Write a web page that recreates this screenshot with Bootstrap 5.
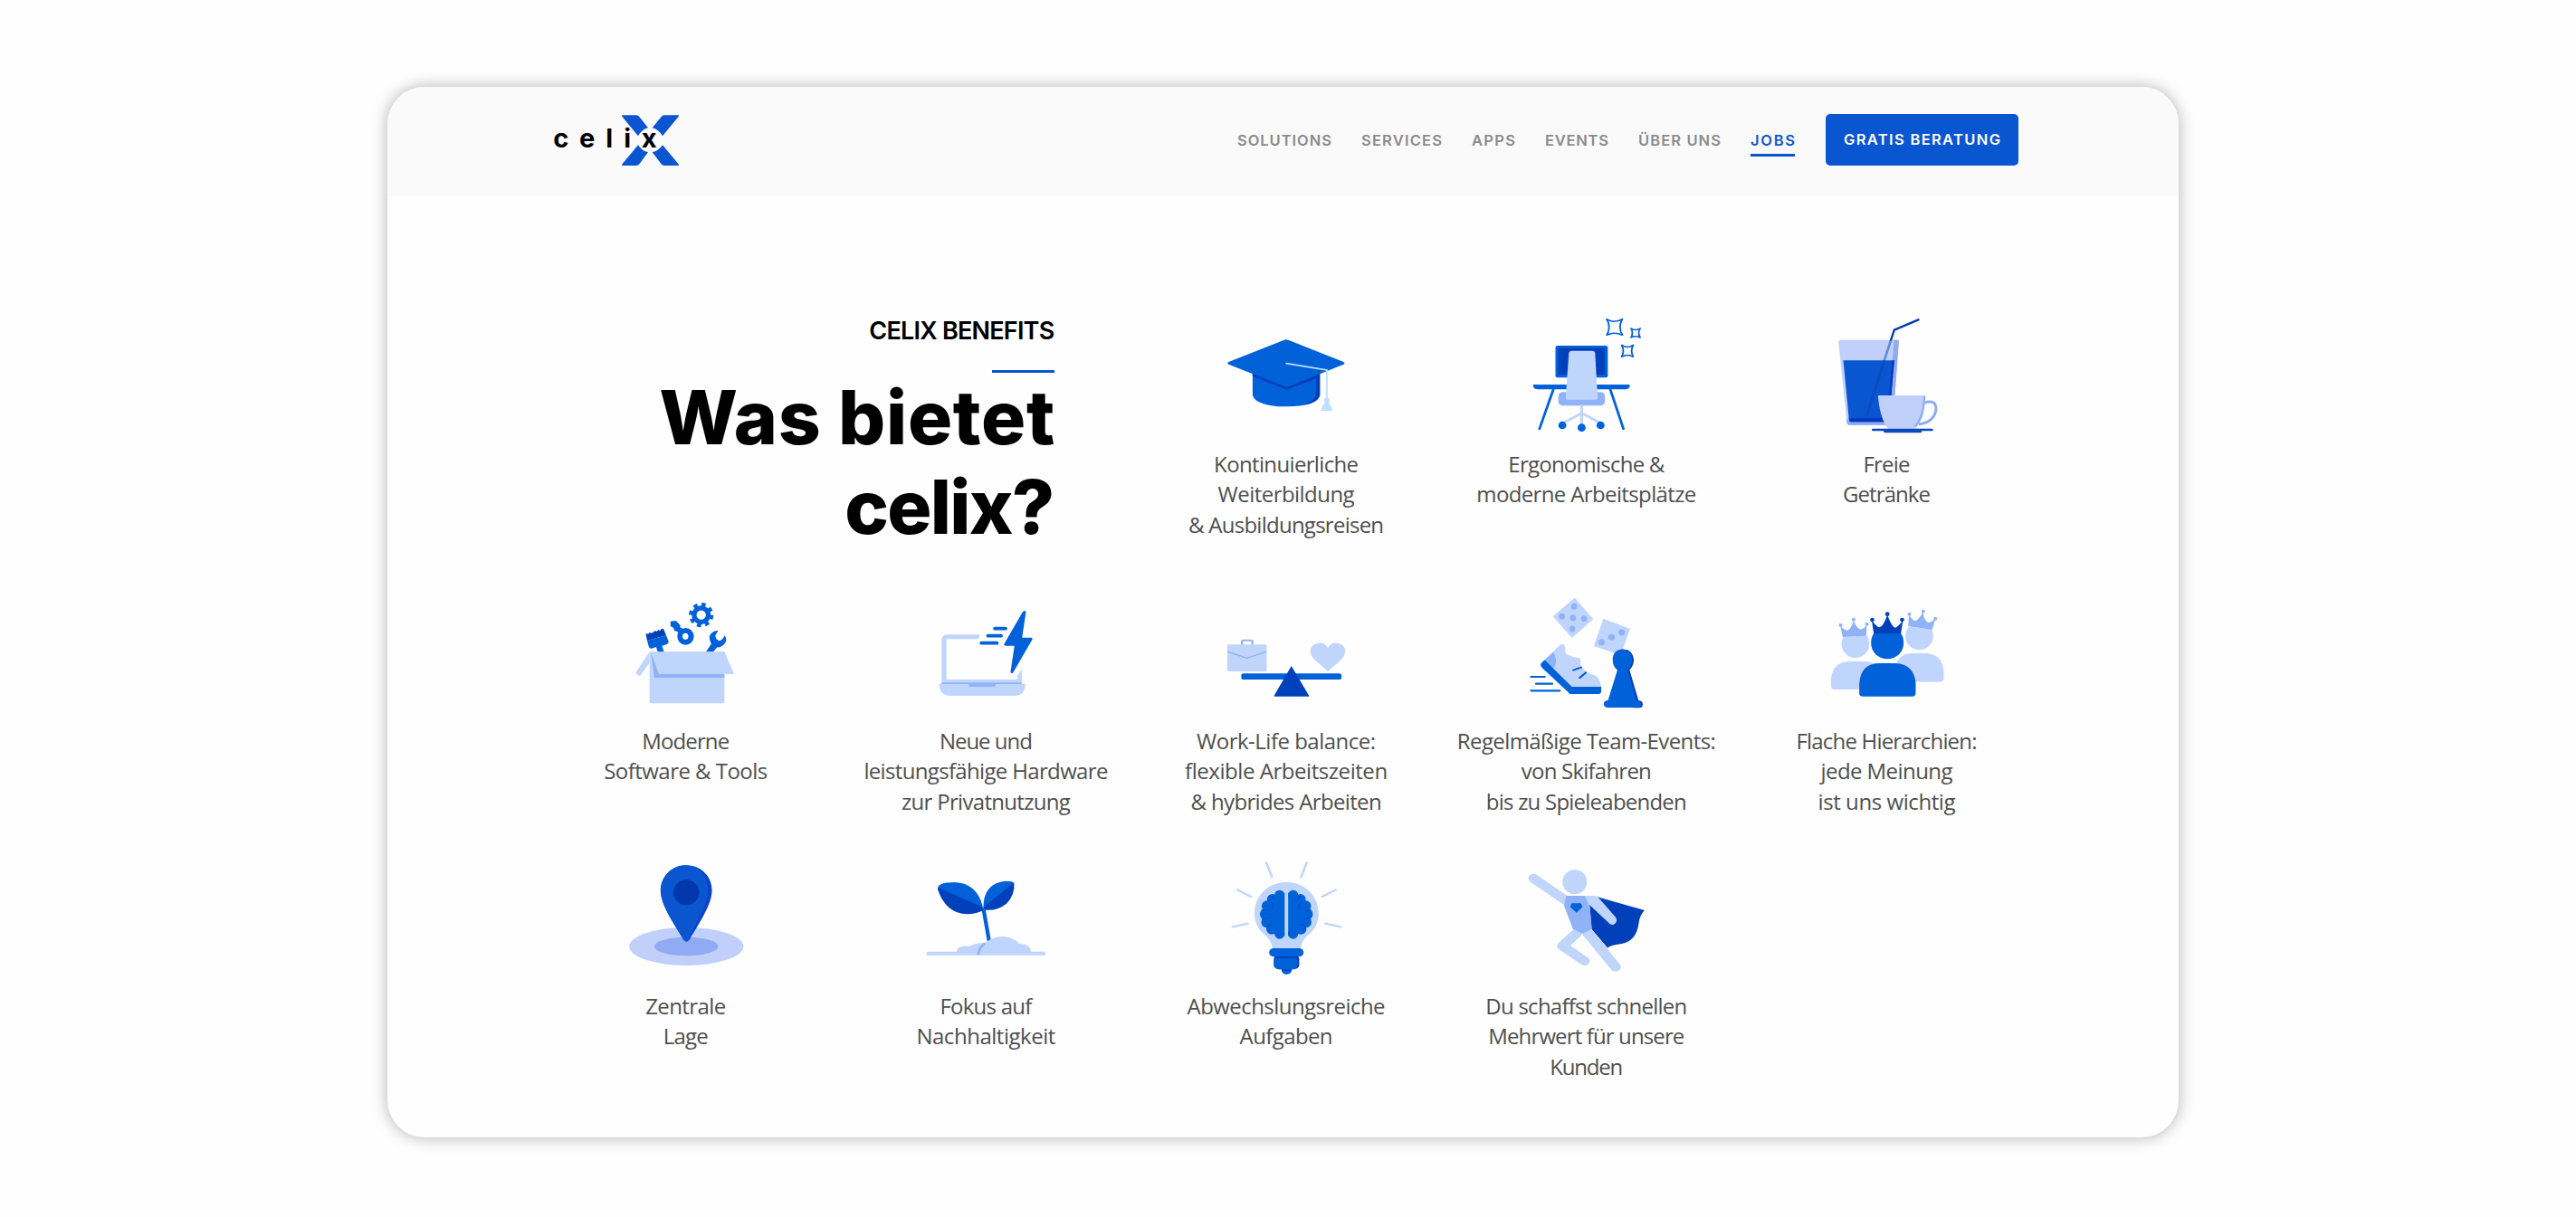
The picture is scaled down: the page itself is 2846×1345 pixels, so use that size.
<!DOCTYPE html>
<html lang="de">
<head>
<meta charset="utf-8">
<meta name="viewport" content="width=device-width, initial-scale=1">
<title>celix – Benefits</title>
<link href="https://cdn.jsdelivr.net/npm/bootstrap@5.3.0/dist/css/bootstrap.min.css" rel="stylesheet">
<style>
  :root { --brand: #0a55d0; }
  body { background: #fefefe; font-family: "Open Sans", "Noto Sans", sans-serif; color: #4f4f4f; }
  .stage { padding: 96px 0 88px 428px; min-height: 100vh; }
  .window { width: 1979px; height: 1161px; border-radius: 41px; box-shadow: 0 0 17px rgba(0,0,0,.3); background: #fefefe; }
  .topbar { height: 121px; background: #fafafa; padding: 30px 177px 0 182px; font-family: Inter, sans-serif; font-weight: 600; font-size: 16.5px; }
  .topbar .nav { gap: 33px; }
  .topbar .nav-link { padding: 0; margin-top: 14.5px; line-height: 28.5px; height: 32px; color: #8b8b8b; border-bottom: 3px solid transparent; white-space: nowrap; }
  .topbar .nav-link.active { color: var(--brand); border-bottom-color: var(--brand); }
  .menu { gap: 34px; }
  .btn-cta { width: 213px; height: 57px; padding: 0; background: var(--brand); color: #fff; border: 0; border-radius: 5px; font-size: 16.5px; font-weight: 600; line-height: 57px; }
  .benefits { padding: 125px 0 0 163.85px; width: 1822.4px; }
  .lane-1 { min-height: 306px; }
  .lane-2 { min-height: 293px; }
  .intro { width: 40%; padding: 6.5px 90px 0 0; font-family: Inter, sans-serif; color: #000; white-space: nowrap; }
  .eyebrow { font-size: 27px; line-height: 33px; font-weight: 600; }
  .accent { width: 69px; height: 3px; background: var(--brand); margin-top: 27.5px; }
  .intro h1 { font-size: 82px; line-height: 99px; font-weight: 800; margin: 0; }
  .benefit svg { width: 180px; height: 150px; display: block; margin: 0 auto 4px; }
  .benefit p { font-size: 24px; line-height: 33.3px; margin: 0; white-space: nowrap; }
  [data-w] { display: inline-block; }
  .c1 { fill: #0061d9; } .c2 { fill: #0040ba; } .c3 { fill: #c0d5fb; } .c4 { fill: #90b3f7; }
  .s1 { stroke: #0061d9; } .s2 { stroke: #0040ba; } .s3 { stroke: #c0d5fb; } .s4 { stroke: #90b3f7; }
  .s1, .s2, .s3, .s4 { fill: none; stroke-linecap: round; stroke-linejoin: round; }
</style>
<script src="https://cdn.jsdelivr.net/npm/bootstrap@5.3.0/dist/js/bootstrap.bundle.min.js"></script>
</head>
<body>
<div class="stage">
<main class="window overflow-hidden">

  <header class="topbar d-flex justify-content-between align-items-start">
    <svg width="140" height="60" viewBox="570 138 420 180" aria-label="celix">
      <g fill="#0a55d0">
        <path d="M802 142H850Q855 142 859 147L888 184Q868 188 855 211L803 148Q800 143 802 142Z"/>
        <path d="M989 142H941Q936 142 932 147L902 184Q922 188 936 211L988 148Q991 143 989 142Z"/>
        <path d="M802 309H850Q855 309 859 304L888 265Q868 261 855 241L803 303Q800 308 802 309Z"/>
        <path d="M989 309H941Q936 309 932 304L902 265Q922 261 936 241L988 303Q991 308 989 309Z"/>
      </g>
      <text y="249" x="574 660 748 808 866" font-family="Inter, sans-serif" font-weight="700" font-size="87" fill="#000">celix</text>
    </svg>
    <div class="menu d-flex align-items-start">
      <nav class="nav flex-nowrap">
        <a class="nav-link" href="#"><span data-w="104">SOLUTIONS</span></a>
        <a class="nav-link" href="#"><span data-w="89">SERVICES</span></a>
        <a class="nav-link" href="#"><span data-w="48">APPS</span></a>
        <a class="nav-link" href="#"><span data-w="70">EVENTS</span></a>
        <a class="nav-link" href="#"><span data-w="91">ÜBER UNS</span></a>
        <a class="nav-link active" href="#"><span data-w="49">JOBS</span></a>
      </nav>
      <a class="btn btn-cta" href="#"><span data-w="173">GRATIS BERATUNG</span></a>
    </div>
  </header>

  <section class="benefits">
    <div class="row g-0 row-cols-5 lane-1">
      <div class="intro d-flex flex-column align-items-end">
        <div class="eyebrow"><span data-w="205">CELIX BENEFITS</span></div>
        <div class="accent"></div>
        <h1 class="text-end"><span data-w="437">Was bietet</span><br><span data-w="232">celix?</span></h1>
      </div>

      <div class="benefit text-center">
        <svg viewBox="102.3 6 448 450" preserveAspectRatio="none">
          <path class="c1" d="M234 210V290Q236 306 262 318Q290 329 327 328Q365 328 393 318Q417 306 419 290V210Z"/>
          <path class="c2" d="M234 219L328 272L419 224V290Q417 306 393 318L370 325Q408 308 408 284V236L328 272L234 226Z"/>
          <path class="c1" d="M321 107Q326 104 332 107L484 180Q490 184 484 188L328 264L168 188Q162 184 168 180Z"/>
          <path class="c1" d="M238 225L328 272L408 236V280L320 300L240 280Z" />
          <path d="M234 219L328 264L419 219V227L328 273L234 227Z" class="c2"/>
          <path d="M327 185L438 207V302" fill="none" stroke="#bfe0fd" stroke-width="5" stroke-linecap="round"/>
          <path d="M432 300Q438 295 444 300L446 308L443 314Q452 328 454 342H421Q424 326 433 314L430 308Z" fill="#bfe0fd"/>
        </svg>
        <p><span data-w="160">Kontinuierliche</span><br><span data-w="151">Weiterbildung</span><br><span data-w="216">&amp; Ausbildungsreisen</span></p>
      </div>

      <div class="benefit text-center">
        <svg viewBox="927.9 6 448 450" preserveAspectRatio="none">
          <rect x="1066" y="126" width="144" height="106" rx="6" class="c1"/>
          <rect x="1074" y="134" width="128" height="88" class="c2"/>
          <path d="M1005 255H1270V262Q1268 271 1258 271H1018Q1007 271 1005 262Z" class="c1"/>
          <path d="M1060 272L1022 402M1217 272L1253 402" class="s1" stroke-width="7"/>
          <rect x="1074" y="280" width="128" height="45" rx="13" class="c4"/>
          <path d="M1103 149Q1104 143 1111 143H1167Q1174 143 1175 149L1182 300Q1182 305 1176 305H1100Q1094 305 1094 300Z" class="c3"/>
          <path d="M1138 325V390M1138 350L1090 381M1138 350L1187 381" class="s3" stroke-width="8"/>
          <ellipse cx="1085" cy="390" rx="11" ry="13" class="c1"/><ellipse cx="1190" cy="390" rx="11" ry="13" class="c1"/><ellipse cx="1138" cy="398" rx="11" ry="13" class="c1"/>
          <g class="s1" stroke-width="4.5">
            <path d="M1207 38Q1229 54 1250 38Q1237 65 1250 91Q1229 78 1207 91Q1220 65 1207 38Z"/>
            <path d="M1274 69Q1286 78 1299 69Q1291 84 1299 99Q1286 91 1274 99Q1281 84 1274 69Z"/>
            <path d="M1248 124Q1264 137 1280 124Q1271 143 1280 163Q1264 152 1248 163Q1257 143 1248 124Z"/>
          </g>
        </svg>
        <p><span data-w="173">Ergonomische &amp;</span><br><span data-w="243">moderne Arbeitsplätze</span></p>
      </div>

      <div class="benefit text-center">
        <svg viewBox="43.5 36 540 450" preserveAspectRatio="none">
          <path d="M152 143Q152 137 158 137H347Q353 137 352 143L332 412Q331 419 325 419H186Q180 419 180 412Z" fill="#c0d0fa"/>
          <path d="M336 137H347Q353 137 352 143L332 412Q331 419 325 419H186Q180 419 180 412L178 396L188 408H316Z" fill="#90aaf4"/>
          <path d="M168 205H337L319 409H193Q187 409 187 402Z" fill="#0a55d0"/>
          <path d="M330 205H337L319 409H193Q187 409 187 402L186 395L193 397H313Z" fill="#0338bd"/>
          <path d="M326 137L304 205" stroke="#5d8fdc" stroke-width="8"/>
          <path d="M304 205L246 388" stroke="#0a4cc0" stroke-width="8"/>
          <path d="M326 137L337 104L417 70" fill="none" stroke="#0338ad" stroke-width="7" stroke-linecap="round"/>
          <path d="M436 345Q478 332 475 370Q468 410 418 417" fill="none" stroke="#90aaf4" stroke-width="9"/>
          <path d="M283 324Q283 321 288 321H436Q441 321 440 327Q438 396 411 424V431H316L310 423Q289 390 283 324Z" fill="#c0d0fa"/>
          <path d="M434 322Q441 321 440 327Q436 396 411 424L402 423Q430 398 434 322Z" fill="#90aaf4"/>
          <path d="M267 431H461Q466 431 466 435Q466 439 461 439H429Q429 445 423 445H307Q301 445 301 439H267Q262 439 262 435Q262 431 267 431Z" fill="#0a49bd"/>
        </svg>
        <p><span data-w="52">Freie</span><br><span data-w="97">Getränke</span></p>
      </div>
    </div>

    <div class="row g-0 row-cols-5 lane-2">
      <div class="benefit text-center">
        <svg viewBox="72.4 24 470 450" preserveAspectRatio="none">
          <g transform="translate(351 119) scale(1 1.15)">
            <circle r="20.5" class="s1" stroke-width="14"/>
            <circle r="29" fill="none" stroke="#0061d9" stroke-width="13" stroke-dasharray="11.4 11.38"/>
          </g>
          <path d="M262 142Q264 138 279 139L291 154L290 160L300 166L289 182L282 174L273 171L271 161L263 157Z" class="c1"/>
          <path fill-rule="evenodd" d="M282 190A24 28 0 1 1 330 190A24 28 0 1 1 282 190ZM297 190A8 10 0 1 0 314 190A8 10 0 1 0 297 190Z" class="c1"/>
          <path d="M195 204L250 187L257 207Q257 213 252 216L238 221L244 242H226L221 225L208 230Q202 231 200 224Z" class="c1"/>
          <path d="M191 180L198 182L202 177L208 179L219 171L222 174L228 168L232 172L236 166L242 164L250 187L195 204Z" class="c2"/>
          <path d="M364 242L380 215Q368 188 383 177Q390 170 400 171L392 187Q392 200 403 205Q412 204 419 186Q425 197 422 208Q412 228 397 226L385 242Z" class="c1"/>
          <path d="M202 241H418V412H202Z" class="c3"/>
          <path d="M202 241L161 312L174 322L202 278Z" class="c3"/>
          <path d="M205 243L216 327H418V310L230 300Z" class="c4"/>
          <path d="M205 241H418L446 315H229Z" class="c3"/>
        </svg>
        <p><span data-w="97">Moderne</span><br><span data-w="181">Software &amp; Tools</span></p>
      </div>

      <div class="benefit text-center">
        <svg viewBox="939 24 470 450" preserveAspectRatio="none">
          <path d="M1047 348V202Q1047 184 1063 184H1158L1153 199H1061V333H1265V322L1278 298V348Z" class="c3"/>
          <path d="M1047 343H1278V349H1047Z" class="c4"/>
          <path d="M1040 348H1288V355Q1284 387 1258 387H1070Q1043 385 1040 355Z" class="c3"/>
          <path d="M1124 348H1203Q1203 357 1196 357H1132Q1124 357 1124 348Z" class="c4"/>
          <path d="M1285 105Q1291 105 1290 110L1279 194H1305Q1311 195 1308 201L1254 308Q1252 313 1248 312Q1245 311 1246 305L1257 221H1231Q1225 220 1228 214L1280 110Z" class="c1"/>
          <path d="M1201 164H1231M1181 188H1218M1162 212H1206" class="s1" stroke-width="11"/>
        </svg>
        <p><span data-w="103">Neue und</span><br><span data-w="270">leistungsfähige Hardware</span><br><span data-w="187">zur Privatnutzung</span></p>
      </div>

      <div class="benefit text-center">
        <svg viewBox="103.9 24 455.2 450" preserveAspectRatio="none">
          <path d="M208 218V206Q208 203 212 203H232Q237 203 237 207V218" class="s4" stroke-width="6"/>
          <rect x="167" y="217" width="110" height="89" rx="4" class="c3"/>
          <path d="M169 241L222 262L275 241" class="s4" stroke-width="3.5"/>
          <path d="M448 306L408 264Q391 239 406 220Q432 200 448 228Q464 200 490 220Q504 239 488 264Z" class="c3"/>
          <rect x="206" y="313" width="280" height="20" rx="7" class="c1"/>
          <path d="M346 288L395 386V389H298V386Z" class="c2"/>
        </svg>
        <p><span data-w="198">Work-Life balance:</span><br><span data-w="224">flexible Arbeitszeiten</span><br><span data-w="211">&amp; hybrides Arbeiten</span></p>
      </div>

      <div class="benefit text-center">
        <svg viewBox="942.8 24 455.2 450" preserveAspectRatio="none">
          <path d="M1137 62L1189 133L1129 195L1076 123Z" class="c3"/>
          <g class="c4"><ellipse cx="1135" cy="91" rx="8.5" ry="10.5"/><ellipse cx="1101" cy="124" rx="8.5" ry="10.5"/><ellipse cx="1132" cy="128" rx="8.5" ry="10.5"/><ellipse cx="1163" cy="131" rx="8.5" ry="10.5"/><ellipse cx="1130" cy="165" rx="8.5" ry="10.5"/></g>
          <path d="M1217 131L1292 165L1265 252L1190 222Z" class="c3"/>
          <g class="c4"><ellipse cx="1268" cy="177" rx="9" ry="10.5"/><ellipse cx="1240" cy="193" rx="9" ry="10.5"/><ellipse cx="1212" cy="209" rx="9" ry="10.5"/></g>
          <path d="M1053 268L1097 217Q1103 212 1109 221L1112 247Q1130 260 1151 262Q1153 263 1153 271V284Q1165 306 1180 314Q1207 318 1211 357H1129Z" class="c3"/>
          <path d="M1053 268L1077 242Q1088 262 1083 284L1077 298Z" class="c4"/>
          <path d="M1053 268L1129 357H1211V372Q1210 381 1205 381H1124L1045 293Q1039 283 1044 278Z" class="c1"/>
          <path d="M1133 302L1155 293M1151 327L1168 310" class="s1" stroke-width="6"/>
          <path d="M1015 324H1053M1029 347H1074M1015 370H1095" class="s1" stroke-width="6.5"/>
          <path d="M1283 234Q1301 243 1302 268Q1302 288 1290 301L1315 402Q1327 403 1327 415Q1327 427 1318 427H1300L1270 235Z" class="c2"/>
          <path d="M1271 232Q1297 235 1297 268Q1297 287 1285 302L1309 402Q1322 403 1322 415Q1323 424 1316 426H1228Q1218 424 1218 414Q1218 403 1230 402L1256 302Q1243 289 1243 268Q1243 235 1271 232Z" class="c1"/>
        </svg>
        <p><span data-w="286">Regelmäßige Team-Events:</span><br><span data-w="144">von Skifahren</span><br><span data-w="222">bis zu Spieleabenden</span></p>
      </div>

      <div class="benefit text-center">
        <svg viewBox="103.5 24 540 450" preserveAspectRatio="none">
          <path d="M187 333Q191 273 250 273H295Q354 273 354 333V366H200Q187 366 187 353Z" class="c3"/>
          <path d="M400 340V306Q404 246 456 246H497Q556 246 561 306V327Q561 341 548 341Z" class="c3"/>
          <circle cx="268" cy="215" r="46" class="c3"/><circle cx="480" cy="189" r="46" class="c3"/>
          <path d="M210 140H320V187L225 193Z" fill="#fefefe"/><path d="M430 110H540L523 167L443 157Z" fill="#fefefe"/>
          <g class="c4"><path d="M226 192L218 154Q231 170 241 170Q253 167 262 138Q273 164 286 167Q296 166 306 151L304 188Z"/><circle cx="219" cy="153" r="6"/><circle cx="262" cy="134" r="6"/><circle cx="306" cy="149" r="6"/></g>
          <g class="c4"><path d="M443 156L446 118Q458 138 466 139Q480 134 492 108Q496 140 510 144Q519 143 533 131L523 168Z"/><circle cx="447" cy="116" r="6"/><circle cx="493" cy="107" r="6"/><circle cx="533" cy="131" r="6"/></g>
          <path d="M281 347Q286 279 348 279H400Q464 282 468 347V377Q468 389 456 389H293Q281 389 281 377Z" class="c1"/>
          <path d="M329 180H419Q428 192 428 212A54 53 0 0 1 320 212Q320 193 329 180Z" class="c1"/>
          <path d="M329 180L322 136Q338 159 348 160Q360 158 374 119Q389 158 400 161Q411 158 426 136L419 180Z" class="c2"/>
          <circle cx="324" cy="135" r="7" class="c2"/><circle cx="374" cy="116" r="7" class="c2"/><circle cx="423" cy="135" r="7" class="c2"/>
        </svg>
        <p><span data-w="200">Flache Hierarchien:</span><br><span data-w="146">jede Meinung</span><br><span data-w="152">ist uns wichtig</span></p>
      </div>
    </div>

    <div class="row g-0 row-cols-5">
      <div class="benefit text-center">
        <svg viewBox="72.4 33 470 450" preserveAspectRatio="none">
          <ellipse cx="308" cy="348" rx="165" ry="63" fill="#c0d0fa"/>
          <ellipse cx="308" cy="348" rx="92" ry="31" fill="#90aaf4"/>
          <path d="M308 79C352 79 383 118 382 164C381 212 340 280 316 327Q308 337 301 327C276 280 235 212 234 164C234 118 264 79 308 79Z" fill="#0a44cb"/>
          <path d="M308 79C350 83 371 118 370 164C369 212 336 270 313 327Q308 335 301 327C276 280 235 212 234 164C234 118 264 79 308 79Z" fill="#0a55d0"/>
          <ellipse cx="308" cy="169" rx="37" ry="42" fill="#0338ad"/>
        </svg>
        <p><span data-w="89">Zentrale</span><br><span data-w="50">Lage</span></p>
      </div>

      <div class="benefit text-center">
        <svg viewBox="939 33 470 450" preserveAspectRatio="none">
          <path d="M1167 220L1184 330" fill="none" stroke="#0061d9" stroke-width="11"/>
          <path d="M1036 153Q1040 135 1084 135Q1150 138 1166 218L1130 212Z" class="c1"/>
          <path d="M1036 152L1166 218V228Q1150 240 1120 241Q1060 240 1036 160Z" class="c2"/>
          <path d="M1255 137Q1253 131 1231 131Q1168 138 1167 218L1230 175Z" class="c1"/>
          <path d="M1256 136L1167 218L1174 227Q1206 231 1234 206Q1259 178 1256 136Z" class="c2"/>
          <path d="M1007 365H1090Q1092 343 1128 347Q1148 334 1173 336Q1194 315 1223 315Q1252 316 1271 339Q1302 338 1305 365H1343Q1347 366 1347 371Q1347 377 1343 377H1007Q1003 377 1003 371Q1003 366 1007 365Z" class="c3"/>
          <path d="M1172 337Q1155 352 1152 376" fill="none" stroke="#90b3f7" stroke-width="7"/>
        </svg>
        <p><span data-w="102">Fokus auf</span><br><span data-w="154">Nachhaltigkeit</span></p>
      </div>

      <div class="benefit text-center">
        <svg viewBox="103.9 33 455.2 450" preserveAspectRatio="none">
          <path d="M276 70L292 118M389 70L373 118M195 160L233 183M470 160L432 183M182 283L224 272M484 283L441 272" class="s3" stroke-width="6.5"/>
          <path d="M332 135C384 135 422 180 422 240Q421 285 391 312Q372 334 372 356H293Q293 334 274 312Q243 285 243 240C243 180 280 135 332 135Z" class="c3"/>
          <g id="hemisphere">
            <path d="M327 170V314L300 308L274 275L270 241L274 210L296 180Z" class="c1"/>
            <g class="c1"><ellipse cx="313" cy="177" rx="14" ry="16"/><ellipse cx="293" cy="191" rx="15" ry="17"/><ellipse cx="278" cy="214" rx="15" ry="18"/><ellipse cx="273" cy="241" rx="15" ry="18"/><ellipse cx="277" cy="268" rx="15" ry="18"/><ellipse cx="291" cy="290" rx="15" ry="18"/><ellipse cx="313" cy="306" rx="14" ry="17"/></g>
            <path d="M293 180Q294 190 301 192M291 201Q299 210 294 226M263 226Q268 230 274 229M264 257Q269 253 275 256M278 291Q278 276 291 274" class="s2" stroke-width="2"/>
          </g>
          <use href="#hemisphere" transform="translate(664 0) scale(-1 1)"/>
          <rect x="297" y="375" width="71" height="49" rx="15" class="c2"/>
          <path d="M297 388H357Q363 388 363 398Q363 423 350 424H312Q297 423 297 405Z" class="c1"/>
          <rect x="284" y="354" width="96" height="28" rx="13" class="c1"/>
          <path d="M318 424H347Q347 441 332 441Q319 440 318 424Z" class="c1"/>
          <path d="M318 424H347L346 429H320Z" class="c2"/>
        </svg>
        <p><span data-w="219">Abwechslungsreiche</span><br><span data-w="103">Aufgaben</span></p>
      </div>

      <div class="benefit text-center">
        <svg viewBox="942.8 33 455.2 450" preserveAspectRatio="none">
          <path d="M1198 183L1332 228Q1318 247 1316 270Q1309 338 1256 341Q1239 343 1229 353L1184 290L1178 205Z" class="c2"/>
          <ellipse cx="1137" cy="134" rx="34" ry="40.5" class="c3"/>
          <path d="M1022 122L1115 198" class="s3" stroke-width="29"/>
          <path d="M1113 180H1192Q1201 181 1205 188L1252 252Q1258 268 1246 275Q1240 278 1234 272L1176 208Z" class="c3"/>
          <path d="M1144 302L1103 346L1164 396" class="s3" stroke-width="30"/>
          <path d="M1174 304L1251 416" class="s3" stroke-width="30"/>
          <path d="M1113 180H1165L1179 215L1185 290L1159 305L1132 290L1107 213Z" class="c4"/>
          <path d="M1129 205H1154L1159 217L1142 236L1124 217Z" class="c1"/>
        </svg>
        <p><span data-w="223">Du schaffst schnellen</span><br><span data-w="217">Mehrwert für unsere</span><br><span data-w="81">Kunden</span></p>
      </div>
    </div>
  </section>
</main>
</div>
<script>
  // Track each line of type to its set measure
  document.querySelectorAll('[data-w]').forEach(function (el) {
    var n = el.textContent.length;
    var ls = (parseFloat(el.dataset.w) - el.getBoundingClientRect().width) / (n - 1);
    el.style.letterSpacing = ls + 'px';
    el.style.marginRight = -ls + 'px';
  });
</script>
</body>
</html>
